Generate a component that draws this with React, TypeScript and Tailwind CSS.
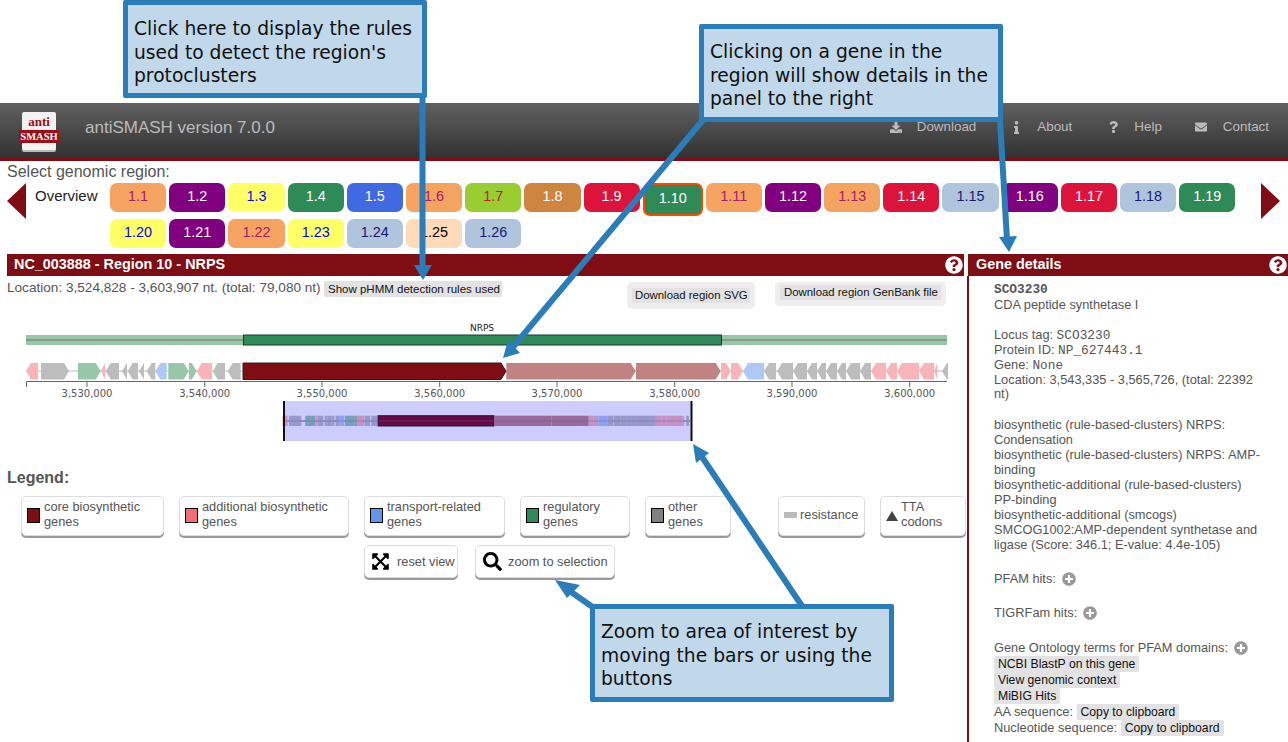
import { FaDownload, FaEnvelope, FaExpandArrowsAlt, FaInfo, FaPlusCircle, FaQuestion, FaQuestionCircle, FaSearch } from "react-icons/fa";
import type { ReactNode } from "react";

const regions = [
  ["1.1", "bg-[#f4a460] text-[#a0206a]"],
  ["1.2", "bg-[#800080] text-white"],
  ["1.3", "bg-[#ffff66] text-[#0000ff]"],
  ["1.4", "bg-[#2e8b57] text-white"],
  ["1.5", "bg-[#4169e1] text-white"],
  ["1.6", "bg-[#f4a460] text-[#a0206a]"],
  ["1.7", "bg-[#9acd32] text-[#b22222]"],
  ["1.8", "bg-[#cd853f] text-white"],
  ["1.9", "bg-[#dc143c] text-white"],
  ["1.10", "bg-[#2e8b57] text-white w-[60px] h-[33px] border-2 border-[#ff4500]"],
  ["1.11", "bg-[#f4a460] text-[#a0206a]"],
  ["1.12", "bg-[#800080] text-white"],
  ["1.13", "bg-[#f4a460] text-[#a0206a]"],
  ["1.14", "bg-[#dc143c] text-white"],
  ["1.15", "bg-[#b0c4de] text-[#191970]"],
  ["1.16", "bg-[#800080] text-white"],
  ["1.17", "bg-[#dc143c] text-white"],
  ["1.18", "bg-[#b0c4de] text-[#191970]"],
  ["1.19", "bg-[#2e8b57] text-white"],
  ["1.20", "bg-[#ffff66] text-[#0000ff]"],
  ["1.21", "bg-[#800080] text-white"],
  ["1.22", "bg-[#f4a460] text-[#a0206a]"],
  ["1.23", "bg-[#ffff66] text-[#0000ff]"],
  ["1.24", "bg-[#b0c4de] text-[#191970]"],
  ["1.25", "bg-[#ffdab9] text-black"],
  ["1.26", "bg-[#b0c4de] text-[#191970]"],
];

const PINK = "#f8b4b9";
const GRAY = "#bdbdbd";
const GREEN = "#98c6a9";
const BLUE = "#b0c8f5";
const ROSE = "#c08283";
const CORE = "#7f0d14";

// start, end, strand, colour
const genes: [number, number, number, string][] = [
  [26, 38, -1, PINK],
  [41, 69, 1, GRAY],
  [78, 100.7, 1, GREEN],
  [101, 105, -1, PINK],
  [105.7, 119, -1, GRAY],
  [122, 127, -1, GRAY],
  [127.7, 138, -1, GRAY],
  [139, 144, -1, GRAY],
  [146.7, 155.3, -1, GRAY],
  [155.3, 166.7, -1, BLUE],
  [168.3, 188.7, 1, GREEN],
  [189, 196.7, 1, GREEN],
  [196.7, 212, -1, PINK],
  [212.7, 225, -1, GRAY],
  [227.7, 240.7, -1, GRAY],
  [243, 506, 1, CORE],
  [506.3, 635.7, 1, ROSE],
  [636, 720.7, 1, ROSE],
  [721, 731, 1, PINK],
  [731, 743, 1, PINK],
  [743, 764, -1, BLUE],
  [764, 776, -1, GRAY],
  [777, 793, -1, GRAY],
  [793, 807, -1, GRAY],
  [807, 817, -1, GRAY],
  [817, 826, -1, GRAY],
  [826, 837, -1, GRAY],
  [837, 846, -1, GRAY],
  [846, 860, -1, GRAY],
  [860, 871, -1, GRAY],
  [871, 886, -1, PINK],
  [886, 897, -1, PINK],
  [897, 919, -1, PINK],
  [919, 934, -1, PINK],
  [934, 937.3, -1, PINK],
  [942, 948, -1, GRAY],
];

const ticks = [87, 204.7, 322, 439.7, 557, 674.7, 792, 909.7];

function genePoints(a: number, b: number, strand: number, top: number, h: number) {
  const mid = top + h / 2;
  const head = Math.min(5, b - a);
  if (strand > 0) {
    return `${a},${top} ${b - head},${top} ${b},${mid} ${b - head},${top + h} ${a},${top + h}`;
  }
  return `${b},${top} ${a + head},${top} ${a},${mid} ${a + head},${top + h} ${b},${top + h}`;
}

function RegionChart() {
  return (
    <svg width="960" height="130" viewBox="0 318 960 130" className="block">
      <rect x="26" y="335" width="921" height="10" fill="#98c6a9" />
      <line x1="26" y1="340" x2="947" y2="340" stroke="#849c8c" strokeWidth="2" />
      <rect x="243.5" y="335" width="478" height="10" fill="#2e8b57" stroke="#1c3a28" />
      <text x="482" y="331" fontSize="9" textAnchor="middle" fontFamily="DejaVu Sans" fill="#222">
        NRPS
      </text>

      <line x1="26" y1="371" x2="947" y2="371" stroke="#bbb" />
      {genes.map(([a, b, s, c]) => (
        <polygon
          key={a}
          points={genePoints(a, b, s, 363, 16.5)}
          fill={c}
          stroke={c === CORE ? "#222" : "none"}
          strokeWidth={c === CORE ? 1 : 0}
        />
      ))}

      <path d="M26.5 387V381.5H947" fill="none" stroke="#666" />
      {ticks.map((t, i) => (
        <g key={t}>
          <line x1={t} y1="381" x2={t} y2="387" stroke="#666" />
          <text x={t} y="397" fontSize="10" textAnchor="middle" fontFamily="DejaVu Sans" fill="#555">
            {i < 7 ? `3,${530 + i * 10},000` : "3,600,000"}
          </text>
        </g>
      ))}

      <line x1="284" y1="421" x2="690" y2="421" stroke="#777" />
      <g>
        {genes.map(([a, b, , c]) => (
          <rect
            key={a}
            x={378 + (a - 243) * 0.441}
            y="415.7"
            width={Math.max((b - a) * 0.441, 1)}
            height="10.3"
            fill={c}
            stroke={c === CORE ? "#222" : "none"}
          />
        ))}
      </g>
      <line x1="284" y1="421" x2="690" y2="421" stroke="#777" strokeOpacity="0.4" />
      <rect x="284" y="401" width="408" height="40" fill="#0000ff" fillOpacity="0.2" />
      <rect x="283" y="401" width="2" height="40" fill="#111" />
      <rect x="690.5" y="401" width="2" height="40" fill="#111" />
    </svg>
  );
}

function LegendButton({ className, children }: { className: string; children: ReactNode }) {
  return (
    <div
      className={`flex shrink-0 items-center rounded-[5px] border border-[#ddd] bg-white text-[12.8px] leading-[15px] text-[#555] shadow-[0_2px_0_#999] ${className}`}
    >
      {children}
    </div>
  );
}

function Swatch({ color }: { color: string }) {
  return <span className={`mr-[4px] mt-[3px] h-[15px] w-[13px] shrink-0 border border-black ${color}`} />;
}

function Chip({ children }: { children: ReactNode }) {
  return <span className="rounded-[2px] bg-[#e2e2e2] px-[4px] py-px text-[12.2px] text-[#111]">{children}</span>;
}

function Mono({ children }: { children: ReactNode }) {
  return <span className="font-['Liberation_Mono',monospace] leading-none">{children}</span>;
}

function Callout({ className, children }: { className: string; children: ReactNode }) {
  return (
    <div
      className={`absolute z-20 h-[98px] w-[304px] rounded-[2px] border-[5px] border-[#2a7db8] bg-[#c0d8ea] pl-[6px] font-['DejaVu_Sans',sans-serif] text-[18.7px] leading-[23.5px] text-[#111] ${className}`}
    >
      {children}
    </div>
  );
}

function Arrows() {
  return (
    <svg width="1288" height="742" viewBox="0 0 1288 742" className="pointer-events-none absolute left-0 top-0 z-10">
      <g stroke="#2a7db8" strokeWidth="6" fill="none">
        <line x1="422.5" y1="96" x2="422.5" y2="268" />
        <line x1="703" y1="120" x2="513" y2="347" />
        <line x1="1000" y1="120" x2="1007" y2="240" />
        <line x1="802" y1="606" x2="700" y2="454" />
        <line x1="594" y1="608" x2="564" y2="587" />
      </g>
      <g fill="#2a7db8">
        <polygon points="414,265 432,265 423,280" />
        <polygon points="503,358 508,340 520,353" />
        <polygon points="999,237 1017,236 1009,252" />
        <polygon points="693,444 709,453 696,463" />
        <polygon points="555,580 580,585 567,598" />
      </g>
    </svg>
  );
}

export default function App() {
  return (
    <div className="relative h-[742px] w-[1288px] overflow-hidden bg-white font-['Liberation_Sans',sans-serif] text-[#555]">
      <Callout className="left-[123px] top-0 pt-[12px]">
        Click here to display the rules
        <br />
        used to detect the region's
        <br />
        protoclusters
      </Callout>
      <Callout className="left-[699px] top-[24px] pt-[11px]">
        Clicking on a gene in the
        <br />
        region will show details in the
        <br />
        panel to the right
      </Callout>
      <Callout className="left-[590px] top-[604px] pt-[11px]">
        Zoom to area of interest by
        <br />
        moving the bars or using the
        <br />
        buttons
      </Callout>
      <Arrows />

      {/* header */}
      <div className="mt-[103px] flex h-[58px] items-start border-b-[4px] border-[#7f0d14] bg-gradient-to-b from-[#616161] to-[#333]">
        <div className="ml-[22px] mt-[9px] flex h-[38px] w-[34px] flex-col items-center rounded-[2px] bg-[#f2f2f2] shadow-[0_2px_0_#bbb]">
          <span className="mt-[1px] font-['Liberation_Serif',serif] text-[13px] font-bold leading-[17px] text-[#a00d14]">anti</span>
          <span className="-mx-[3px] w-[40px] bg-[#a00d14] text-center font-['Liberation_Serif',serif] text-[10.5px] font-bold leading-[13px] text-white">
            SMASH
          </span>
        </div>
        <span className="ml-[29px] mt-[15px] text-[17px] leading-[20px] text-[#bbb]">antiSMASH version 7.0.0</span>
        <div className="ml-auto mt-[16px] flex items-center text-[13.4px] leading-[16px] text-[#bbb]">
          <FaDownload className="mr-[14px] h-[12px] w-[14px]" />
          <span className="mr-[37px]">Download</span>
          <FaInfo className="mr-[17px] h-[13px] w-[7px]" />
          <span className="mr-[37px]">About</span>
          <FaQuestion className="mr-[16px] h-[14px] w-[9px]" />
          <span className="mr-[32px]">Help</span>
          <FaEnvelope className="mr-[15px] h-[12px] w-[14px]" />
          <span className="mr-[19px]">Contact</span>
        </div>
      </div>

      {/* region selector */}
      <div className="ml-[7px] mt-px text-[16px] leading-[20px]">Select genomic region:</div>
      <div className="mt-px flex h-[71px] items-start">
        <div className="ml-[7px] h-0 w-0 border-y-[18.5px] border-r-[19px] border-y-transparent border-r-[#7f0d14]" />
        <span className="ml-[9px] mt-[3px] w-[75px] text-[15px] leading-[20px] text-[#222]">Overview</span>
        <div className="flex w-[1140px] flex-wrap items-start gap-[3px]">
          {regions.map(([label, cls]) => (
            <div
              key={label}
              className={`flex h-[29px] w-[56.2px] items-center justify-center rounded-[7px] pb-[2px] text-[14.4px] ${cls}`}
            >
              {label}
            </div>
          ))}
        </div>
        <div className="ml-auto mr-[8px] h-0 w-0 border-y-[18.5px] border-l-[19px] border-y-transparent border-l-[#7f0d14]" />
      </div>

      <div className="flex">
        {/* region panel */}
        <div className="w-[964px] shrink-0">
          <div className="ml-[7px] flex h-[22px] items-center justify-between bg-[#7f0d14] pb-px pl-[7px] pr-px text-[14.4px] font-bold text-white">
            NC_003888 - Region 10 - NRPS
            <FaQuestionCircle className="mt-px h-[18px] w-[18px]" />
          </div>
          <div className="flex h-[42px] items-start whitespace-nowrap pl-[7px]">
            <span className="mt-[4px] w-[313px] shrink-0 text-[13.6px] leading-[16px]">
              Location: 3,524,828 - 3,603,907 nt. (total: 79,080 nt)
            </span>
            <span className="ml-[4px] mt-[5px] w-[178px] shrink-0 rounded-[2px] bg-[#e2e2e2] px-[4px] text-[11.5px] leading-[16px] text-[#111]">
              Show pHMM detection rules used
            </span>
            <div className="ml-[125px] mt-[6px] w-[128px] shrink-0 rounded-[5px] bg-[#eee] px-[5px] pb-[6px] pt-[6px] text-[11.4px] leading-[15px] text-[#111]">
              <div className="bg-[#e2e2e2] px-[3px]">Download region SVG</div>
            </div>
            <div className="ml-[20px] mt-[6px] w-[171px] shrink-0 rounded-[5px] bg-[#eee] px-[5px] pb-[6px] pt-[3px] text-[11.4px] leading-[15px] text-[#111]">
              <div className="bg-[#e2e2e2] px-[4px]">Download region GenBank file</div>
            </div>
          </div>
          <RegionChart />
          <div className="ml-[7px] mt-[20px] text-[16px] font-bold leading-[20px]">Legend:</div>
          <div className="ml-[21px] mt-[8px] flex h-[40px] gap-[15px]">
            <LegendButton className="w-[143px] pb-[4px] pl-[5px]">
              <Swatch color="bg-[#7f0d14]" />
              <span>core biosynthetic genes</span>
            </LegendButton>
            <LegendButton className="w-[170px] pb-[4px] pl-[5px]">
              <Swatch color="bg-[#f16d75]" />
              <span>additional biosynthetic genes</span>
            </LegendButton>
            <LegendButton className="w-[141px] pb-[4px] pl-[5px]">
              <Swatch color="bg-[#6495ed]" />
              <span>transport-related genes</span>
            </LegendButton>
            <LegendButton className="w-[110px] pb-[4px] pl-[5px]">
              <Swatch color="bg-[#2e8b57]" />
              <span>regulatory genes</span>
            </LegendButton>
            <LegendButton className="w-[86px] pb-[4px] pl-[5px]">
              <Swatch color="bg-[#808080]" />
              <span>
                other
                <br />
                genes
              </span>
            </LegendButton>
            <LegendButton className="ml-[32px] w-[87px] pb-[3px] pl-[5px]">
              <span className="mr-[3px] h-[6px] w-[13px] bg-[#bbb]" />
              <span>resistance</span>
            </LegendButton>
            <LegendButton className="w-[86px] pb-[4px] pl-[5px]">
              <span className="mr-[3px] mt-[4px] h-0 w-0 shrink-0 border-x-[6px] border-b-[10px] border-x-transparent border-b-[#444]" />
              <span>
                TTA
                <br />
                codons
              </span>
            </LegendButton>
          </div>
          <div className="ml-[364px] mt-[9px] flex gap-[17px]">
            <LegendButton className="h-[33px] w-[94px] pl-[6px]">
              <FaExpandArrowsAlt className="mr-[7px] h-[19px] w-[19px] text-black" />
              reset view
            </LegendButton>
            <LegendButton className="h-[33px] w-[140px] pl-[7px]">
              <FaSearch className="mr-[6px] h-[19px] w-[19px] text-black" />
              zoom to selection
            </LegendButton>
          </div>
        </div>

        {/* gene details */}
        <div className="ml-[3px] flex-1">
          <div className="ml-px flex h-[22px] items-center justify-between bg-[#7f0d14] pb-px pl-[8px] pr-px text-[14.4px] font-bold text-white">
            Gene details
            <FaQuestionCircle className="mt-px h-[18px] w-[18px]" />
          </div>
          <div className="h-[466px] border-l-2 border-[#7f0d14] pl-[25px] pt-[7px] text-[12.8px] leading-[14.9px]">
            <div className="w-[270px]">
              <div className="font-['Liberation_Mono',monospace] font-bold">SCO3230</div>
              <div>CDA peptide synthetase I</div>
              <div className="mt-[15px]">
                Locus tag: <Mono>SCO3230</Mono>
              </div>
              <div>
                Protein ID: <Mono>NP_627443.1</Mono>
              </div>
              <div>
                Gene: <Mono>None</Mono>
              </div>
              <div>Location: 3,543,335 - 3,565,726, (total: 22392 nt)</div>
              <div className="mt-[16px]">biosynthetic (rule-based-clusters) NRPS: Condensation</div>
              <div>biosynthetic (rule-based-clusters) NRPS: AMP-binding</div>
              <div>biosynthetic-additional (rule-based-clusters) PP-binding</div>
              <div>biosynthetic-additional (smcogs)</div>
              <div>SMCOG1002:AMP-dependent synthetase and ligase (Score: 346.1; E-value: 4.4e-105)</div>
              <div className="mt-[19px] flex items-start">
                PFAM hits:
                <FaPlusCircle className="ml-[6px] h-[14px] w-[14px] text-[#999]" />
              </div>
              <div className="mt-[20px] flex items-start">
                TIGRFam hits:
                <FaPlusCircle className="ml-[6px] h-[14px] w-[14px] text-[#999]" />
              </div>
              <div className="mt-[20px] flex items-start">
                Gene Ontology terms for PFAM domains:
                <FaPlusCircle className="ml-[6px] h-[14px] w-[14px] text-[#999]" />
              </div>
              <div className="leading-[16px]">
                <Chip>NCBI BlastP on this gene</Chip>
              </div>
              <div className="leading-[16px]">
                <Chip>View genomic context</Chip>
              </div>
              <div className="leading-[15px]">
                <Chip>MiBIG Hits</Chip>
              </div>
              <div className="leading-[16px]">
                AA sequence: <Chip>Copy to clipboard</Chip>
              </div>
              <div className="leading-[16px]">
                Nucleotide sequence: <Chip>Copy to clipboard</Chip>
              </div>
            </div>
          </div>
        </div>
      </div>
    </div>
  );
}
